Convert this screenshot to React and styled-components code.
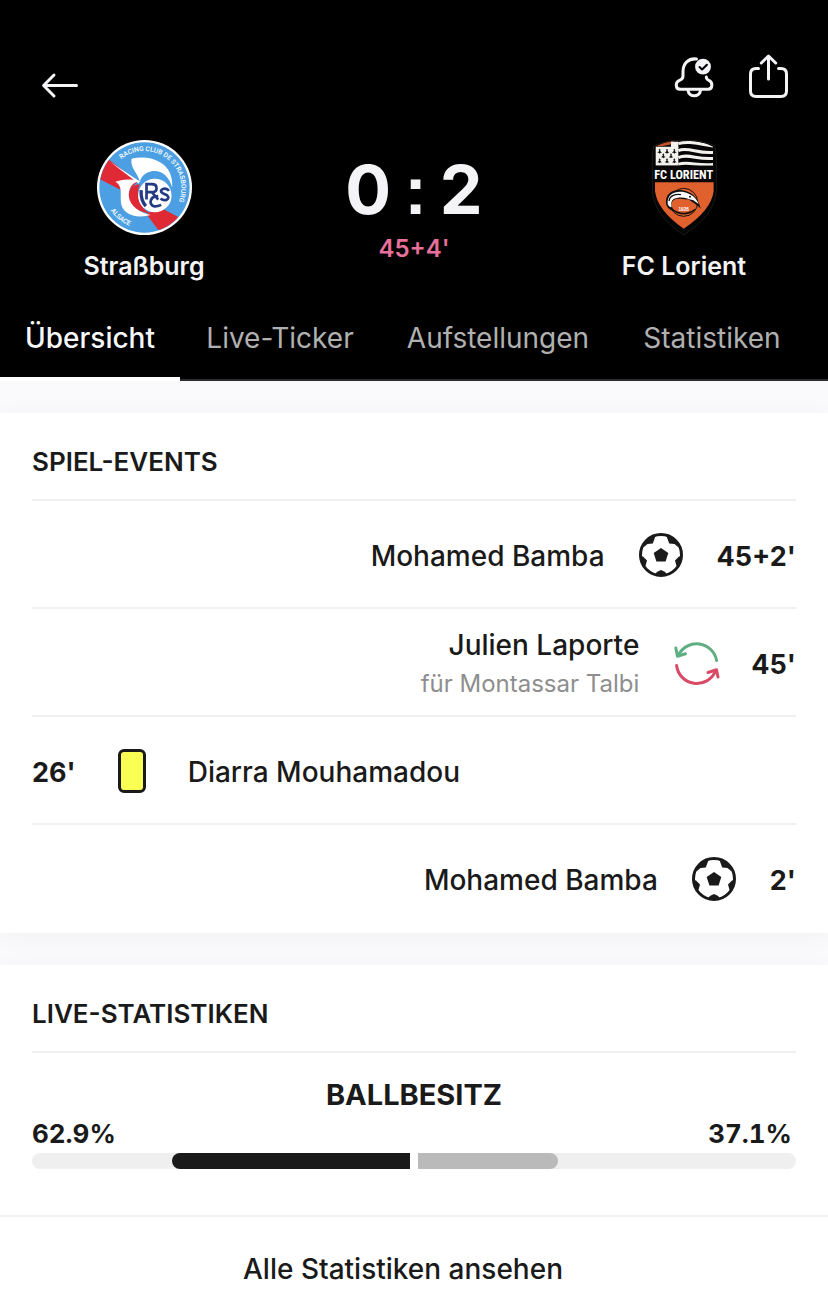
import React from "react";
import styled, { createGlobalStyle } from "styled-components";

const GlobalStyle = createGlobalStyle`
  *, *::before, *::after { box-sizing: border-box; }
  body {
    margin: 0;
    background: #fafafc;
    color: #1a1a1a;
    font-family: Inter, "Liberation Sans", sans-serif;
    font-optical-sizing: none;
  }
  button { font: inherit; color: inherit; background: none; border: 0; padding: 0; cursor: pointer; }
  a { color: inherit; text-decoration: none; }
  svg { display: block; flex: none; overflow: visible; }
  h1, h2, h3, p, ul { margin: 0; padding: 0; }
`;

const Header = styled.header`
  background: #000;
  color: #f4f4f6;
`;

const Toolbar = styled.div`
  display: flex;
  justify-content: space-between;
  align-items: flex-end;
  padding: 54px 38px 0 40px;
`;

const ToolbarActions = styled.div`
  display: flex;
  align-items: flex-end;
  gap: 34px;
`;

const IconButton = styled.button`
  display: block;
`;

const Scoreboard = styled.div`
  display: grid;
  grid-template-columns: 8fr 7fr 8fr;
  padding-top: 40px;
`;

const Team = styled.div`
  display: flex;
  flex-direction: column;
  align-items: center;
  gap: 14px;
`;

const CrestBox = styled.div`
  display: flex;
  align-items: center;
  height: 96px;
`;

const TeamName = styled.h2`
  font-size: 25px;
  line-height: 34px;
  font-weight: 600;
`;

const ScoreColumn = styled.div`
  display: flex;
  flex-direction: column;
  align-items: center;
  padding-top: 8px;
`;

const Score = styled.h1`
  display: flex;
  align-items: baseline;
  gap: 13px;
  font-size: 68px;
  line-height: 84px;
  font-weight: 700;
  white-space: nowrap;
`;

const ScoreColon = styled.span`
  font-family: "Liberation Sans", sans-serif;
`;

const Clock = styled.p`
  font-size: 24px;
  line-height: 34px;
  font-weight: 600;
  color: #e8709a;
`;

const Tabs = styled.nav`
  display: grid;
  grid-template-columns: 45fr 50fr 59fr 48fr;
  margin-top: 12px;
  padding-right: 20px;
  box-shadow: inset 0 -2px #2c2c2e;
`;

const Tab = styled.a`
  display: block;
  height: 86px;
  padding-top: 26px;
  text-align: center;
  white-space: nowrap;
  font-size: 28px;
  line-height: 34px;
  font-weight: ${(p) => (p.$active ? 500 : 400)};
  color: ${(p) => (p.$active ? "#f7f7f9" : "#b0b0b0")};
  border-bottom: 4px solid ${(p) => (p.$active ? "#fff" : "transparent")};
`;

const Content = styled.main`
  display: flex;
  flex-direction: column;
  gap: 32px;
  padding-top: 32px;
`;

const Card = styled.section`
  background: #fff;
  box-shadow: 0 4px 24px rgba(20, 20, 50, 0.04);
`;

const CardTitle = styled.h2`
  margin: 0 32px;
  padding: 32px 0 20px;
  font-size: 26px;
  line-height: 34px;
  font-weight: 600;
`;

const EventList = styled.ul`
  list-style: none;
  margin: 0 32px;
  padding-bottom: 2px;
`;

const EventRow = styled.li`
  display: flex;
  flex-direction: ${(p) => (p.$away ? "row-reverse" : "row")};
  align-items: center;
  gap: 34px;
  height: 108px;
  padding-top: 2px;
  border-top: 2px solid #efefef;
`;

const EventTime = styled.span`
  padding-top: 4px;
  font-size: 27px;
  line-height: 40px;
  font-weight: 700;
`;

const EventIcon = styled.span`
  display: flex;
  justify-content: center;
  width: 44px;
`;

const EventText = styled.div`
  padding-top: 2px;
  text-align: ${(p) => (p.$away ? "right" : "left")};
`;

const PlayerName = styled.p`
  font-size: 28px;
  line-height: 40px;
  font-weight: 500;
`;

const PlayerNote = styled.p`
  font-size: 24px;
  line-height: 38px;
  color: #8e8e8e;
`;

const YellowCard = styled.span`
  width: 28px;
  height: 44px;
  border: 3px solid #1a1a1a;
  border-radius: 6px;
  background: #faff54;
`;

const Stat = styled.div`
  margin: 0 32px;
  padding: 22px 0 46px;
  border-top: 2px solid #efefef;
`;

const StatName = styled.h3`
  text-align: center;
  font-size: 29px;
  line-height: 40px;
  font-weight: 700;
`;

const StatValues = styled.div`
  display: flex;
  justify-content: space-between;
  padding-right: 4px;
  font-size: 26px;
  line-height: 38px;
  font-weight: 700;
  font-variant-numeric: tabular-nums;
`;

const Bars = styled.div`
  display: flex;
  gap: 8px;
`;

const BarTrack = styled.div`
  flex: 1;
  display: flex;
  justify-content: ${(p) => (p.$away ? "flex-start" : "flex-end")};
  height: 16px;
  background: #efefef;
  border-radius: ${(p) => (p.$away ? "0 8px 8px 0" : "8px 0 0 8px")};
`;

const BarFill = styled.div`
  background: ${(p) => (p.$away ? "#bababa" : "#1a1a1a")};
  border-radius: inherit;
`;

const AllStats = styled.a`
  display: block;
  padding: 32px 22px 32px 0;
  border-top: 2px solid #efefef;
  text-align: center;
  font-size: 28px;
  line-height: 40px;
  font-weight: 500;
`;

const BackIcon = () => (
  <svg width="40" height="28" viewBox="0 0 40 28" fill="none" stroke="#f4f4f6" strokeWidth="3" strokeLinecap="round" strokeLinejoin="round">
    <path d="M14 4 3.6 14.5 14 25M4 14.5H36.5" />
  </svg>
);

const BellIcon = () => (
  <svg width="40" height="43" viewBox="0 0 40 43" fill="none" stroke="#f4f4f6" strokeWidth="3" strokeLinecap="round" strokeLinejoin="round">
    <path d="M22.5 3C14.500 2 9 7.500 9 15.500V20C9 22.500 8 23.400 5.500 24.300 1 26 1.200 33 6 33.300H34C39 33 39 26 34.800 24.300 33 23.600 32.400 22.900 32.300 21" />
    <path d="M14 34.500C15 41.500 25.500 41.500 26.500 34.500" />
    <circle cx="29" cy="10.700" r="7.900" fill="#f4f4f6" stroke="none" />
    <path d="m25.500 11 2.600 2.500 4.800-4.800" stroke="#000" strokeWidth="2" />
  </svg>
);

const ShareIcon = () => (
  <svg width="42" height="45" viewBox="0 0 42 45" fill="none" stroke="#f4f4f6" strokeWidth="3" strokeLinecap="round" strokeLinejoin="round">
    <path d="M10.500 14.500H8Q2.500 14.500 2.500 20V37Q2.500 42.500 8 42.500H33Q38.500 42.500 38.500 37V20Q38.500 14.500 33 14.500H30.500" />
    <path d="M20.500 25V2.500M13.300 9 20.500 2 27.700 9" />
  </svg>
);

const BallIcon = () => (
  <svg width="44" height="44" viewBox="0 0 44 44" fill="#1a1a1a">
    <circle cx="22" cy="22" r="20.500" fill="none" stroke="#1a1a1a" strokeWidth="3" />
    <path d="m22 15 7.300 5-2.700 8.600h-9.200L14.700 20Z" />
    <path d="M6 8 16.500 2 15.800 5 13.800 10.500 8.500 11 5 14ZM38 8 27.500 2 28.200 5 30.200 10.500 35.500 11 39 14Z" />
    <path d="M1 23 4 23.500 8 27.500 6.300 33.500 4 34ZM43 23 40 23.500 36 27.500 37.700 33.500 40 34ZM16 42 17.800 39 22 37 26.200 39 28 42Z" />
  </svg>
);

const SubstitutionIcon = () => (
  <svg width="44" height="44" viewBox="0 0 44 44" fill="none" strokeWidth="3" strokeLinecap="round" strokeLinejoin="round">
    <g stroke="#5fae82">
      <path d="M43.600 19.500A20.300 20.300 0 0 0 5.500 14" />
      <path d="M2.800 7 4.500 15.200 12.500 12.800" />
    </g>
    <g stroke="#d84a66">
      <path d="M3.600 24.500A20.300 20.300 0 0 0 42.500 30" />
      <path d="M35 31.500 43.500 28.800 45 36" />
    </g>
  </svg>
);

const StrasbourgCrest = () => (
  <svg width="95" height="95" viewBox="20 28 284 284" role="img" aria-label="Racing Club de Strasbourg Alsace">
    <defs>
      <path id="rcs-arc" d="M52 171A110 110 0 1 1 162 281" />
      <path id="rcs-bottom" d="M40 171A122 122 0 0 0 162 293" />
      <clipPath id="rcs-clip"><circle cx="162" cy="170" r="134" /></clipPath>
    </defs>
    <circle cx="162" cy="170" r="142" fill="#fff" />
    <circle cx="162" cy="170" r="135" fill="#4b9fe2" />
    <g clipPath="url(#rcs-clip)">
      <path d="M52 84 142 152 108 186 18 140V90ZM206 228 270 262 228 330 168 250Z" fill="#df2935" />
    </g>
    <path d="M124 87C142 132 141 141 153 157 159 137 172 119 198 119 222 119 237 133 243 153L242 183C228 146 195 137 166 149L147 164 137 151C122 143 121 110 124 87Z" fill="#4b9fe2" />
    <path d="M123 84C155 76 188 81 211 96 236 112 246 135 245 170 235 133 209 117 186 121 163 125 152 138 148 154 142 124 119 115 123 84Z" fill="#fff" />
    <path d="M75 153C91 145 117 143 146 150 129 157 115 165 116 191 119 226 148 246 181 252 139 264 91 252 91 207 91 182 94 164 75 153Z" fill="#fff" />
    <path d="M148 160C131 162 114 170 115 195 118 228 149 245 182 249 162 239 149 225 145 204 141 187 143 173 148 160Z" fill="#df2935" />
    <path d="m58 92 90 60-4 6Z" fill="#fff" />
    <circle cx="193" cy="194" r="50" fill="#fff" />
    <g fill="none" stroke="#243a84" strokeWidth="8">
      <path d="M152 178Q150 208 166 226" strokeWidth="10" />
      <path d="M168 206V160H184Q198 160 198 172T184 184H170M184 184 203 206" />
      <path d="M235 180Q230 172 219 174 205 179 216 187L229 193Q238 201 228 207 218 210 210 203" />
      <path d="M212 222Q184 234 180 214 181 196 203 196" />
    </g>
    <g fill="#fff" fontFamily="Roboto, sans-serif" fontWeight="500" fontSize="20">
      <text><textPath href="#rcs-arc" startOffset="98">RACING CLUB DE STRASBOURG</textPath></text>
      <text><textPath href="#rcs-bottom" startOffset="72">ALSACE</textPath></text>
    </g>
  </svg>
);

const ERMINE = [[60, 62], [82, 62], [104, 62], [71, 76], [94, 76], [60, 91], [82, 91], [104, 91]];

const LorientCrest = () => (
  <svg width="67" height="97" viewBox="34 26 201 291" role="img" aria-label="FC Lorient">
    <defs>
      <clipPath id="fcl-top"><path d="M47 106V49Q86 29 132 32 180 29 220 49V106Z" /></clipPath>
    </defs>
    <path d="M42 47Q85 27 133 30 182 27 226 47L230 75V180Q226 255 132 314 42 255 38 180V75Z" fill="#050505" stroke="#2b2522" strokeWidth="2" />
    <g clipPath="url(#fcl-top)">
      <path d="M47 49H116V106H47Z" fill="#f3f1ee" />
      <path d="M47 49V42L112 28 96 36V42L74 46Z" fill="#c4532c" />
      <path d="M94 34H116V52H94Z" fill="#f3f1ee" />
      <g fill="none" stroke="#f3f1ee" strokeWidth="9">
        <path d="M116 40C150 30 180 42 222 47M116 61C145 48 175 72 222 66M116 82C145 68 175 90 222 84M116 102C145 92 175 108 222 102" />
      </g>
      {ERMINE.map(([x, y]) => (
        <path key={`${x}-${y}`} d={`M${x} ${y - 7}l3 4-2 2 6 7-4-1-3 3-3-3-4 1 6-7-2-2Z`} fill="#111" />
      ))}
    </g>
    <text x="132" y="145" textAnchor="middle" fontSize="37" fontWeight="700" fontFamily="Roboto Condensed, Liberation Sans Narrow, sans-serif" fill="#fff">FC LORIENT</text>
    <path d="M46 156H222V182Q215 240 132 295 53 240 46 182Z" fill="#e0612d" />
    <circle cx="132" cy="216" r="42" fill="none" stroke="#111" strokeWidth="3" />
    <path d="M79 219C76 191 99 174 128 180 157 184 176 203 183 235 169 220 160 218 146 207 130 209 111 200 100 211 91 220 98 234 105 242 91 241 81 232 79 219Z" fill="#111" />
    <path d="M84 218C83 190 107 181 132 185 154 189 171 204 177 221L160 209C144 207 135 198 111 203 96 205 93 216 96 231 88 230 84 224 84 218Z" fill="#fff" />
    <path d="M88 212C90 196 108 190 124 193" fill="none" stroke="#111" strokeWidth="4" />
    <path d="M98 238Q132 262 166 238" fill="none" stroke="#111" strokeWidth="5" />
    <circle cx="151" cy="199" r="3" fill="#111" />
    <text x="132" y="242" textAnchor="middle" fontSize="14" fontWeight="700" fontFamily="Liberation Sans, sans-serif" fill="#fff">1926</text>
  </svg>
);

const TABS = ["Übersicht", "Live-Ticker", "Aufstellungen", "Statistiken"];

const EVENTS = [
  { time: "45+2'", icon: <BallIcon />, name: "Mohamed Bamba", away: true },
  { time: "45'", icon: <SubstitutionIcon />, name: "Julien Laporte", note: "für Montassar Talbi", away: true },
  { time: "26'", icon: <YellowCard />, name: "Diarra Mouhamadou", away: false },
  { time: "2'", icon: <BallIcon />, name: "Mohamed Bamba", away: true },
];

const POSSESSION = { home: 62.9, away: 37.1 };

export default function App() {
  return (
    <>
      <GlobalStyle />
      <Header>
        <Toolbar>
          <IconButton aria-label="Zurück"><BackIcon /></IconButton>
          <ToolbarActions>
            <IconButton aria-label="Benachrichtigungen"><BellIcon /></IconButton>
            <IconButton aria-label="Teilen"><ShareIcon /></IconButton>
          </ToolbarActions>
        </Toolbar>
        <Scoreboard>
          <Team>
            <CrestBox><StrasbourgCrest /></CrestBox>
            <TeamName>Straßburg</TeamName>
          </Team>
          <ScoreColumn>
            <Score>
              <span>0</span>
              <ScoreColon>:</ScoreColon>
              <span>2</span>
            </Score>
            <Clock>45+4'</Clock>
          </ScoreColumn>
          <Team>
            <CrestBox><LorientCrest /></CrestBox>
            <TeamName>FC Lorient</TeamName>
          </Team>
        </Scoreboard>
        <Tabs>
          {TABS.map((label, i) => (
            <Tab key={label} href="#" $active={i === 0} aria-current={i === 0 ? "page" : undefined}>{label}</Tab>
          ))}
        </Tabs>
      </Header>
      <Content>
        <Card>
          <CardTitle>SPIEL-EVENTS</CardTitle>
          <EventList>
            {EVENTS.map((e) => (
              <EventRow key={e.time} $away={e.away}>
                <EventTime>{e.time}</EventTime>
                <EventIcon>{e.icon}</EventIcon>
                <EventText $away={e.away}>
                  <PlayerName>{e.name}</PlayerName>
                  {e.note && <PlayerNote>{e.note}</PlayerNote>}
                </EventText>
              </EventRow>
            ))}
          </EventList>
        </Card>
        <Card>
          <CardTitle>LIVE-STATISTIKEN</CardTitle>
          <Stat>
            <StatName>BALLBESITZ</StatName>
            <StatValues>
              <span>{POSSESSION.home}%</span>
              <span>{POSSESSION.away}%</span>
            </StatValues>
            <Bars>
              <BarTrack><BarFill style={{ width: `${POSSESSION.home}%` }} /></BarTrack>
              <BarTrack $away><BarFill $away style={{ width: `${POSSESSION.away}%` }} /></BarTrack>
            </Bars>
          </Stat>
          <AllStats href="#">Alle Statistiken ansehen</AllStats>
        </Card>
      </Content>
    </>
  );
}
